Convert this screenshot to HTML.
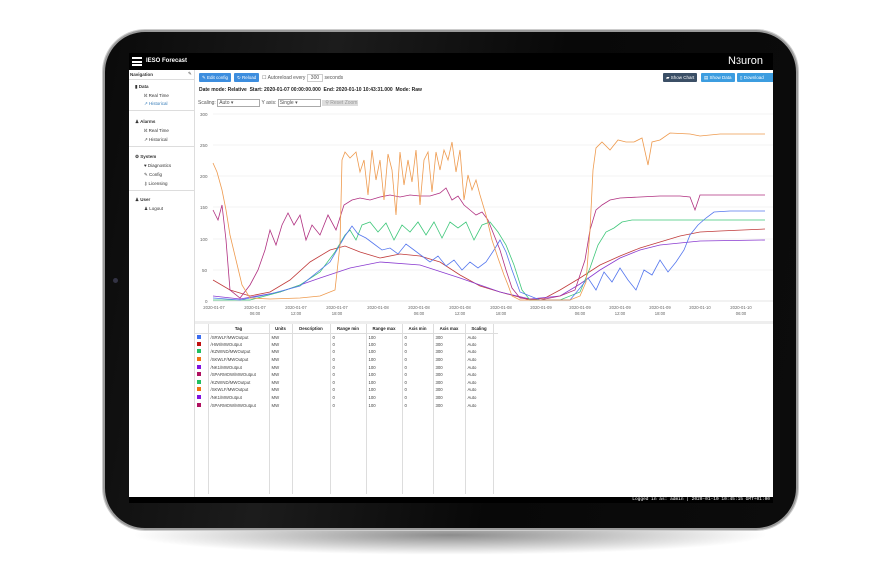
<!DOCTYPE html>
<html><head><meta charset="utf-8"><style>
*{margin:0;padding:0;box-sizing:border-box}
body{width:870px;height:575px;background:#fff;position:relative;overflow:hidden;font-family:"Liberation Sans",sans-serif}
.shadow{position:absolute;left:130px;top:515px;width:640px;height:40px;border-radius:50%;background:radial-gradient(ellipse at center,rgba(0,0,0,.45),rgba(0,0,0,0) 70%)}
.tab{position:absolute;left:103px;top:30px;width:695px;height:500px;border-radius:42px;background:linear-gradient(100deg,#0a0a0a 0%,#1c1c1c 30%,#080808 60%,#0c0c0c 100%);border:2px solid #9a9a9a;box-shadow:0 0 0 1px #ccc}
.cam{position:absolute;left:113px;top:278px;width:5px;height:5px;border-radius:50%;background:#334}
.scr{position:absolute;left:129px;top:53px;width:644px;height:450px;background:#fff;overflow:hidden}
.hdr{position:absolute;left:0;top:0;width:644px;height:17px;background:#000;color:#fff;font-size:6px;font-weight:bold}
.side{position:absolute;left:0;top:17px;width:66px;height:427px;border-right:1px solid #ddd;font-size:4.5px;color:#333}
.side div{position:absolute}
.btn{position:absolute;height:9px;font-size:4.5px;color:#fff;line-height:9px;padding:0 3px;border-radius:1px}
.txt{position:absolute;font-size:5px;color:#222;white-space:nowrap}
.status{position:absolute;left:0;top:444px;width:644px;height:6px;background:#000;color:#fff;font-family:"Liberation Mono",monospace;font-size:4.5px;text-align:right;padding-right:3px;line-height:6px}
table{position:absolute;left:66px;top:271px;border-collapse:collapse;font-size:4.3px;color:#444}
td,th{border-left:1px solid #ddd;padding:0 2px;height:7.6px;vertical-align:middle;white-space:nowrap}
th{border-bottom:1px solid #ddd;height:9px;color:#222}
.sq{display:inline-block;width:4px;height:4px}
</style></head><body>
<div class="shadow"></div>
<div class="tab"></div>
<div class="cam"></div>
<div class="scr">
 <div class="hdr">
  <div style="position:absolute;left:3px;top:4px;width:10px;height:9px;border-top:2px solid #fff;border-bottom:2px solid #fff"><div style="margin-top:2px;height:1.5px;background:#fff"></div></div>
  <div style="position:absolute;left:17px;top:5px">IESO Forecast</div>
  <div style="position:absolute;right:10px;top:2px;font-size:11px;font-weight:normal">N<span style="font-size:9px">3</span>uron</div>
 </div>
 <div class="side">
  <div style="left:1px;top:2px;font-weight:bold">Navigation</div>
  <div style="left:59px;top:1px">✎</div>
  <div style="left:0;top:9px;width:66px;border-top:1px solid #ddd"></div>
  <div style="left:6px;top:14px;font-weight:bold">▮ Data</div>
  <div style="left:15px;top:23px">ℵ Real Time</div>
  <div style="left:15px;top:31px;color:#337ab7">↗ Historical</div>
  <div style="left:0;top:40px;width:66px;border-top:1px solid #ddd"></div>
  <div style="left:6px;top:49px;font-weight:bold">♟ Alarms</div>
  <div style="left:15px;top:58px">ℵ Real Time</div>
  <div style="left:15px;top:67px">↗ Historical</div>
  <div style="left:0;top:76px;width:66px;border-top:1px solid #ddd"></div>
  <div style="left:6px;top:84px;font-weight:bold">⚙ System</div>
  <div style="left:15px;top:93px">♥ Diagnostics</div>
  <div style="left:15px;top:102px">✎ Config</div>
  <div style="left:15px;top:111px">⚷ Licensing</div>
  <div style="left:0;top:120px;width:66px;border-top:1px solid #ddd"></div>
  <div style="left:6px;top:127px;font-weight:bold">♟ User</div>
  <div style="left:15px;top:136px">♟ Logout</div>
 </div>
 <div class="btn" style="left:70px;top:20px;background:#3c8dde">✎ Edit config</div>
 <div class="btn" style="left:105px;top:20px;background:#3c8dde">↻ Reload</div>
 <div class="txt" style="left:133px;top:22px;color:#555">☐ Autoreload every <span style="border:1px solid #ccc;padding:0 3px">300</span> seconds</div>
 <div class="btn" style="left:534px;top:20px;background:#3b4f66">▰ Show Chart</div>
 <div class="btn" style="left:572px;top:20px;background:#3c9de0">▤ Show Data</div>
 <div class="btn" style="left:608px;top:20px;background:#3c9de0;width:40px">▯ Download CSV</div>
 <div class="txt" style="left:70px;top:34px;font-weight:bold">Date mode: Relative&nbsp; Start: 2020-01-07 00:00:00.000&nbsp; End: 2020-01-10 10:43:31.000&nbsp; Mode: Raw</div>
 <div class="txt" style="left:69px;top:46px;color:#555">Scaling: <span style="display:inline-block;width:43px;border:1px solid #aaa;padding-left:1px">Auto ▾</span> Y axis: <span style="display:inline-block;width:43px;border:1px solid #aaa;padding-left:1px">Single ▾</span> <span style="display:inline-block;width:36px;background:#ddd;color:#999;padding-left:3px">⚲ Reset Zoom</span></div>
 <svg style="position:absolute;left:0;top:0" width="644" height="271" viewBox="129 53 644 271">
  <g stroke="#e8e8e8" stroke-width="0.6">
   <line x1="213" x2="773" y1="114" y2="114"/><line x1="213" x2="773" y1="145" y2="145"/><line x1="213" x2="773" y1="176" y2="176"/><line x1="213" x2="773" y1="207" y2="207"/><line x1="213" x2="773" y1="239" y2="239"/><line x1="213" x2="773" y1="270" y2="270"/><line x1="213" x2="773" y1="301" y2="301" stroke="#ccc"/>
  </g>
  <g font-size="4.5" fill="#666" font-family="Liberation Sans">
   <text x="200" y="116">300</text><text x="200" y="147">250</text><text x="200" y="178">200</text><text x="200" y="209">150</text><text x="200" y="241">100</text><text x="202" y="272">50</text><text x="205" y="303">0</text>
  </g>
  <g font-size="4.2" fill="#666" font-family="Liberation Sans" text-anchor="middle">
   <text x="214" y="309">2020-01-07</text>
   <text x="255" y="309">2020-01-07</text><text x="255" y="315">06:00</text>
   <text x="296" y="309">2020-01-07</text><text x="296" y="315">12:00</text>
   <text x="337" y="309">2020-01-07</text><text x="337" y="315">18:00</text>
   <text x="378" y="309">2020-01-08</text>
   <text x="419" y="309">2020-01-08</text><text x="419" y="315">06:00</text>
   <text x="460" y="309">2020-01-08</text><text x="460" y="315">12:00</text>
   <text x="501" y="309">2020-01-08</text><text x="501" y="315">18:00</text>
   <text x="541" y="309">2020-01-09</text>
   <text x="580" y="309">2020-01-09</text><text x="580" y="315">06:00</text>
   <text x="620" y="309">2020-01-09</text><text x="620" y="315">12:00</text>
   <text x="660" y="309">2020-01-09</text><text x="660" y="315">18:00</text>
   <text x="700" y="309">2020-01-10</text>
   <text x="741" y="309">2020-01-10</text><text x="741" y="315">06:00</text>
  </g>
  <g fill="none" stroke-width="0.8">
   <polyline stroke="#c03b3b" points="213,280 230,290 250,296 270,292 290,280 310,262 330,250 345,246 360,252 380,258 400,254 420,256 440,262 460,275 480,286 500,292 515,296 530,300 545,298 560,290 580,278 600,265 620,256 640,248 660,242 680,236 700,232 720,231 765,229"/>
   <polyline stroke="#8a3bd0" points="213,296 240,299 280,292 320,278 350,268 380,262 420,265 460,278 500,292 530,299 560,296 580,284 600,270 620,258 640,250 660,245 680,243 700,241 765,240"/>
   <polyline stroke="#b03080" points="213,210 218,220 222,205 226,240 230,290 240,298 250,285 258,270 265,250 270,230 276,245 282,225 288,213 294,225 300,215 306,240 312,225 320,235 328,215 336,230 344,205 352,200 360,198 370,200 380,197 390,195 400,197 410,195 420,196 430,196 440,193 446,188 452,200 458,196 464,205 470,210 476,215 482,212 488,220 494,235 500,250 506,270 512,288 520,298 540,300 560,296 575,290 585,260 590,230 596,210 602,205 610,200 620,198 640,197 660,196 680,196 690,197 695,210 700,195 765,195"/>
   <polyline stroke="#3fc77a" points="213,300 250,300 280,292 300,285 320,272 335,252 345,235 350,230 356,240 362,225 370,222 378,232 386,223 394,240 402,225 410,232 418,222 426,235 434,222 442,238 450,222 458,228 466,222 474,240 482,225 490,222 498,232 506,245 514,265 522,290 530,300 560,300 580,292 590,268 598,245 606,232 614,228 622,222 632,220 650,220 700,220 765,220"/>
   <polyline stroke="#5577ee" points="213,298 240,300 270,294 300,286 330,262 345,236 352,226 358,234 366,238 374,244 382,250 390,248 398,254 406,244 414,250 422,256 430,262 438,256 446,266 454,260 462,270 470,262 478,268 486,262 494,250 500,240 506,252 512,270 520,292 540,300 570,300 580,288 588,278 596,290 604,272 612,282 620,268 628,280 636,290 644,270 652,275 660,260 668,272 676,262 684,250 690,235 698,225 706,218 714,212 730,211 765,211"/>
   <polyline stroke="#ee9a4e" points="213,163 217,172 222,190 226,210 230,235 236,260 242,285 250,298 270,299 300,298 320,296 335,290 340,245 342,160 345,152 350,158 356,152 360,172 364,160 368,195 372,150 376,180 380,160 384,200 388,154 392,170 396,215 400,152 404,185 408,160 412,182 416,150 420,205 424,160 428,152 432,192 436,152 440,170 444,150 448,160 452,142 456,172 460,150 464,200 468,175 472,190 476,180 480,195 486,215 492,240 498,258 504,275 508,285 512,296 520,300 570,300 580,296 586,282 590,230 593,170 596,148 602,142 610,150 618,140 626,142 634,142 642,138 648,165 652,142 660,140 670,133 690,134 700,136 720,134 765,134"/>
  </g>
 </svg>
 <div style="position:absolute;left:66px;top:268px;width:578px;height:3px;background:#eee"></div>
 <table>
  <tr><th style="border-left:none;width:13px"></th><th style="width:61px">Tag</th><th style="width:23px">Units</th><th style="width:38px">Description</th><th style="width:36px">Range min</th><th style="width:36px">Range max</th><th style="width:31px">Axis min</th><th style="width:32px">Axis max</th><th style="width:28px">Scaling</th><th style="width:1px"></th></tr>
  <tr><td style="border-left:none"><span class="sq" style="background:#3b6cf0"></span></td><td>/SRWLF/MWOutput</td><td>MW</td><td></td><td>0</td><td>100</td><td>0</td><td>300</td><td>Auto</td><td></td></tr>
  <tr><td style="border-left:none"><span class="sq" style="background:#c01010"></span></td><td>/HWI/MWOutput</td><td>MW</td><td></td><td>0</td><td>100</td><td>0</td><td>300</td><td>Auto</td><td></td></tr>
  <tr><td style="border-left:none"><span class="sq" style="background:#20c060"></span></td><td>/KZWIND/MWOutput</td><td>MW</td><td></td><td>0</td><td>100</td><td>0</td><td>300</td><td>Auto</td><td></td></tr>
  <tr><td style="border-left:none"><span class="sq" style="background:#ee7010"></span></td><td>/SKWLF/MWOutput</td><td>MW</td><td></td><td>0</td><td>100</td><td>0</td><td>300</td><td>Auto</td><td></td></tr>
  <tr><td style="border-left:none"><span class="sq" style="background:#8010e0"></span></td><td>/NK1/MWOutput</td><td>MW</td><td></td><td>0</td><td>100</td><td>0</td><td>300</td><td>Auto</td><td></td></tr>
  <tr><td style="border-left:none"><span class="sq" style="background:#b01060"></span></td><td>/SPARMOW/MWOutput</td><td>MW</td><td></td><td>0</td><td>100</td><td>0</td><td>300</td><td>Auto</td><td></td></tr>
  <tr><td style="border-left:none"><span class="sq" style="background:#20c060"></span></td><td>/KZWIND/MWOutput</td><td>MW</td><td></td><td>0</td><td>100</td><td>0</td><td>300</td><td>Auto</td><td></td></tr>
  <tr><td style="border-left:none"><span class="sq" style="background:#ee7010"></span></td><td>/SKWLF/MWOutput</td><td>MW</td><td></td><td>0</td><td>100</td><td>0</td><td>300</td><td>Auto</td><td></td></tr>
  <tr><td style="border-left:none"><span class="sq" style="background:#8010e0"></span></td><td>/NK1/MWOutput</td><td>MW</td><td></td><td>0</td><td>100</td><td>0</td><td>300</td><td>Auto</td><td></td></tr>
  <tr><td style="border-left:none"><span class="sq" style="background:#b01060"></span></td><td>/SPARMOW/MWOutput</td><td>MW</td><td></td><td>0</td><td>100</td><td>0</td><td>300</td><td>Auto</td><td></td></tr>
  <tr><td style="border-left:none;height:85px"></td><td></td><td></td><td></td><td></td><td></td><td></td><td></td><td></td><td></td></tr>
 </table>
 <div class="status">Logged in as: admin | 2020-01-10 10:45:15 GMT+01:00</div>
</div>
</body></html>
